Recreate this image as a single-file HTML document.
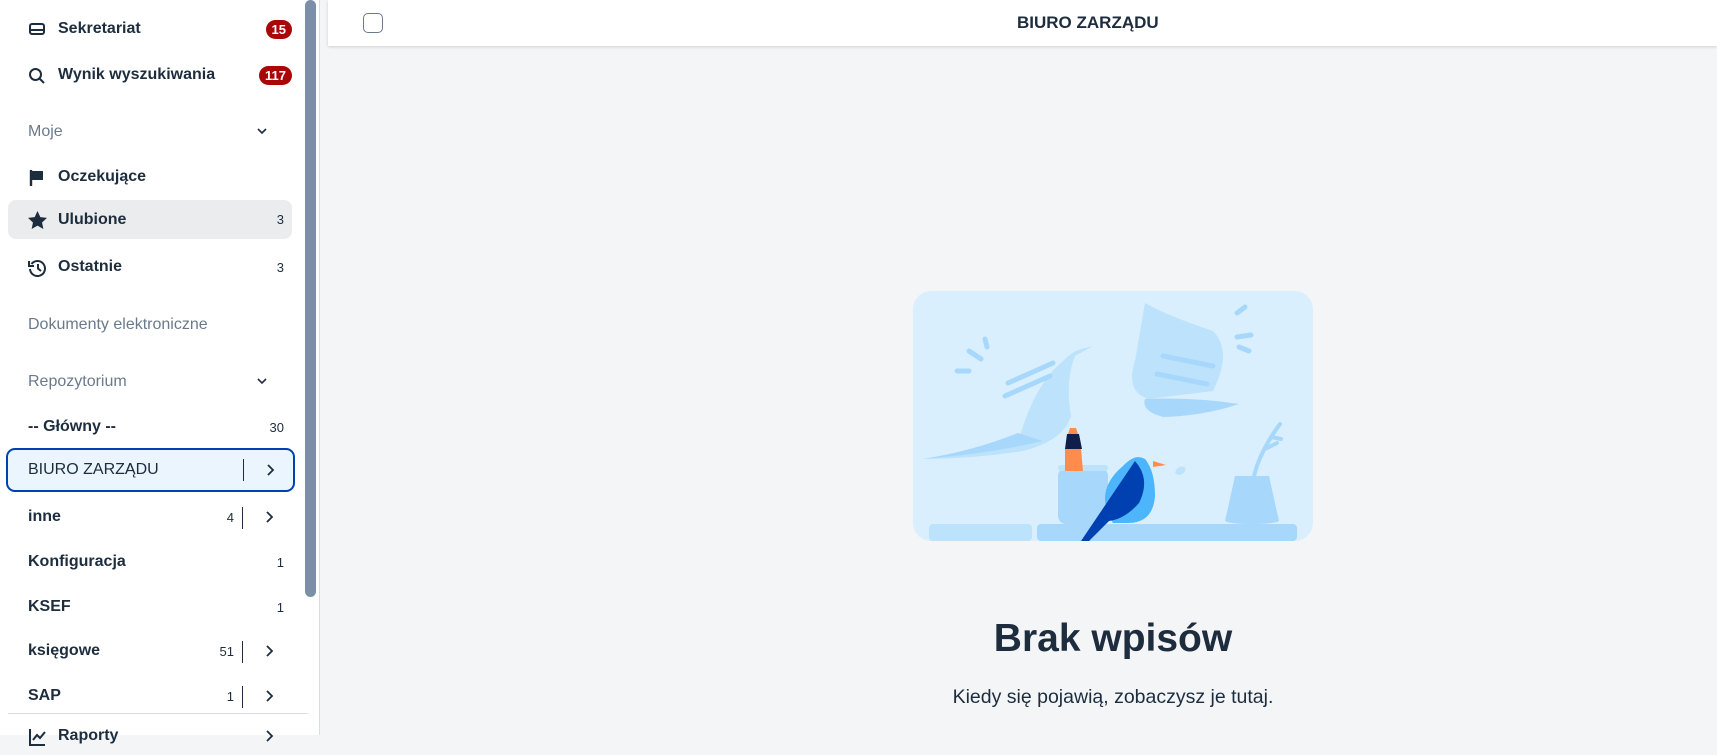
<!DOCTYPE html>
<html><head><meta charset="utf-8"><style>
*{box-sizing:border-box;margin:0;padding:0}
body{width:1717px;height:735px;overflow:hidden;background:#f4f5f7;font-family:"Liberation Sans",sans-serif;color:#1d2d3e;position:relative}
#side{position:absolute;left:0;top:0;width:320px;height:735px;background:#fff;border-right:1px solid #d9dde3}
.row{position:absolute;left:8px;width:284px;height:38px;display:flex;align-items:center;font-size:16px;font-weight:bold}
.row .ic{position:absolute;left:20px;top:11px}
.row .t{position:absolute;left:50px}
.row.s .t{left:20px}
.sec{color:#6a7a8c;font-weight:normal}
.cnt{position:absolute;right:8px;font-size:13px;font-weight:normal}
.badge{position:absolute;right:0;background:#aa0808;color:#fff;font-size:13px;font-weight:bold;border-radius:10px;padding:2px 6px}
.sep{position:absolute;left:234px;top:9px;width:1px;height:22px;background:#1d2d3e}
.chev{position:absolute;left:257px;top:11px}
#scroll{position:absolute;left:305px;top:0;width:11px;height:597px;background:#7b90a8;border-radius:6px}
#hdr{position:absolute;left:328px;top:0;right:0;height:46px;background:#fff;box-shadow:0 1px 3px rgba(0,0,0,.15)}
</style></head><body>
<div id="side">
<div class="row" style="top:10px"><svg class="ic" width="18" height="16" viewBox="0 0 18 16"><rect x="2" y="3" width="14" height="10" rx="2" fill="none" stroke="#1d2d3e" stroke-width="2"/><line x1="2" y1="9" x2="16" y2="9" stroke="#1d2d3e" stroke-width="2"/></svg><span class="t">Sekretariat</span><span class="badge">15</span></div>
<div class="row" style="top:56px"><svg class="ic" width="18" height="18" viewBox="0 0 18 18"><circle cx="7.5" cy="7.5" r="5.5" fill="none" stroke="#1d2d3e" stroke-width="2"/><line x1="11.5" y1="11.5" x2="16" y2="16" stroke="#1d2d3e" stroke-width="2"/></svg><span class="t">Wynik wyszukiwania</span><span class="badge">117</span></div>
<div class="row s" style="top:113px"><span class="t sec">Moje</span><svg class="chev" style="left:248px;top:14px" width="12" height="8" viewBox="0 0 12 8"><path d="M2 2l4 4 4-4" fill="none" stroke="#1d2d3e" stroke-width="1.6"/></svg></div>
<div class="row" style="top:158px"><svg class="ic" width="18" height="18" viewBox="0 0 18 18"><path d="M3 1v16" stroke="#1d2d3e" stroke-width="2.4"/><path d="M3 2h12v9H3z" fill="#1d2d3e"/></svg><span class="t">Oczekujące</span></div>
<div class="row" style="top:200px;background:#eaecee;border-radius:8px;height:39px"><svg class="ic" width="19" height="18" viewBox="0 0 20 19"><path d="M10 0l3 6.5 7 .8-5.2 4.8 1.4 6.9L10 15.5 3.8 19l1.4-6.9L0 7.3l7-.8z" fill="#1d2d3e"/></svg><span class="t">Ulubione</span><span class="cnt">3</span></div>
<div class="row" style="top:248px"><svg class="ic" width="19" height="18" viewBox="0 0 19 18"><path d="M3.5 5A7.5 7.5 0 1 1 2 10" fill="none" stroke="#1d2d3e" stroke-width="2"/><path d="M1 2v5h5" fill="none" stroke="#1d2d3e" stroke-width="2"/><path d="M10 5v4.5l3 2.5" fill="none" stroke="#1d2d3e" stroke-width="2"/></svg><span class="t">Ostatnie</span><span class="cnt">3</span></div>
<div class="row s" style="top:306px"><span class="t sec">Dokumenty elektroniczne</span></div>
<div class="row s" style="top:363px"><span class="t sec">Repozytorium</span><svg class="chev" style="left:248px;top:14px" width="12" height="8" viewBox="0 0 12 8"><path d="M2 2l4 4 4-4" fill="none" stroke="#1d2d3e" stroke-width="1.6"/></svg></div>
<div class="row s" style="top:408px"><span class="t">-- Główny --</span><span class="cnt">30</span></div>
<div class="row s" style="top:448px;left:6px;width:289px;height:44px;background:#ebf5fe;border:2px solid #0040b0;border-radius:9px"><span class="t" style="left:20px;font-weight:normal">BIURO ZARZĄDU</span><div class="sep" style="left:235px;top:9px"></div><svg class="chev" style="left:258px;top:14px" width="10" height="12" viewBox="0 0 10 12"><path d="M2 1l5 5-5 5" fill="none" stroke="#1d2d3e" stroke-width="1.8"/></svg></div>
<div class="row s" style="top:498px"><span class="t">inne</span><span class="cnt" style="right:58px">4</span><div class="sep"></div><svg class="chev" width="10" height="12" viewBox="0 0 10 12" style="top:13px"><path d="M2 1l5 5-5 5" fill="none" stroke="#1d2d3e" stroke-width="1.8"/></svg></div>
<div class="row s" style="top:543px"><span class="t">Konfiguracja</span><span class="cnt">1</span></div>
<div class="row s" style="top:588px"><span class="t">KSEF</span><span class="cnt">1</span></div>
<div class="row s" style="top:632px"><span class="t">księgowe</span><span class="cnt" style="right:58px">51</span><div class="sep"></div><svg class="chev" width="10" height="12" viewBox="0 0 10 12" style="top:13px"><path d="M2 1l5 5-5 5" fill="none" stroke="#1d2d3e" stroke-width="1.8"/></svg></div>
<div class="row s" style="top:677px"><span class="t">SAP</span><span class="cnt" style="right:58px">1</span><div class="sep"></div><svg class="chev" width="10" height="12" viewBox="0 0 10 12" style="top:13px"><path d="M2 1l5 5-5 5" fill="none" stroke="#1d2d3e" stroke-width="1.8"/></svg></div>
<div style="position:absolute;left:8px;top:713px;width:300px;height:1px;background:#d9dde3"></div>
<div class="row" style="top:717px"><svg class="ic" width="18" height="18" viewBox="0 0 18 18"><path d="M2 1v16h15" fill="none" stroke="#1d2d3e" stroke-width="2"/><path d="M5 12l4-5 3 3 5-6" fill="none" stroke="#1d2d3e" stroke-width="2"/></svg><span class="t">Raporty</span><svg class="chev" width="10" height="12" viewBox="0 0 10 12" style="top:13px"><path d="M2 1l5 5-5 5" fill="none" stroke="#1d2d3e" stroke-width="1.8"/></svg></div>
<div id="scroll"></div>
</div>
<div id="hdr">
<div style="position:absolute;left:35px;top:13px;width:20px;height:20px;border:1.5px solid #6a7a8c;border-radius:5px"></div>
<div style="position:absolute;left:689px;top:13px;font-size:17px;font-weight:bold">BIURO ZARZĄDU</div>
</div>
<svg style="position:absolute;left:913px;top:291px" width="400" height="250" viewBox="0 0 400 250">
<rect width="400" height="250" rx="18" fill="#d9effd"/>
<path d="M10 168 Q55 160 105 152 Q120 95 150 70 Q160 60 168 58 L180 55 L162 65 Q152 90 158 125 Q150 150 110 160 Q60 168 10 168z" fill="#bde2fc"/>
<path d="M10 168 Q80 162 130 150 L105 142 Q60 160 10 168z" fill="#a7d8fc"/>
<path d="M95 92l45-20M92 105l45-20" stroke="#a7d8fc" stroke-width="5" stroke-linecap="round"/>
<path d="M72 48l2 8M56 60l12 8M44 80h12" stroke="#a7d8fc" stroke-width="5" stroke-linecap="round"/>
<path d="M232 12 Q255 25 300 40 Q320 60 300 100 L235 108 Q212 100 222 70z" fill="#bde2fc"/>
<path d="M232 108 Q280 106 326 113 Q290 125 250 126 Q228 120 232 108z" fill="#a7d8fc"/>
<path d="M250 65l50 10M244 83l50 10" stroke="#a7d8fc" stroke-width="5" stroke-linecap="round"/>
<path d="M332 16l-8 6M338 44l-14 2M336 60l-10 -4" stroke="#a7d8fc" stroke-width="5" stroke-linecap="round"/>
<rect x="16" y="233" width="103" height="17" rx="4" fill="#bde2fc"/>
<rect x="124" y="233" width="260" height="17" rx="4" fill="#a7d8fc"/>
<rect x="145" y="177" width="50" height="56" rx="8" fill="#a7d8fc"/>
<rect x="145" y="174" width="50" height="6" rx="3" fill="#bde2fc"/>
<path d="M152 158h16l2 22h-18z" fill="#ff8c4a"/>
<path d="M154 143h12l3 15h-17z" fill="#0f1e4a"/>
<path d="M157 137h6l2 6h-10z" fill="#ff8c4a"/>
<path d="M200 232 Q180 200 210 175 Q222 162 232 168 Q242 180 242 205 Q240 232 215 232z" fill="#4cb5fb"/>
<path d="M168 250 L222 170 Q238 188 226 212 Q212 228 196 230 L174 252z" fill="#0040b0"/>
<path d="M240 170l13 4-13 2z" fill="#ff8c4a"/>
<path d="M262 182q2-8 10-6q2 6-6 8z" fill="#bde2fc"/>
<path d="M322 185h34l10 45q-5 3-27 3q-22 0-27-3z" fill="#a7d8fc"/>
<path d="M341 185q6-25 26-52M352 158l12-6M358 146l10 2" stroke="#a7d8fc" stroke-width="4" fill="none" stroke-linecap="round"/>
</svg>
<div style="position:absolute;left:813px;width:600px;top:617px;text-align:center;font-size:39px;font-weight:bold">Brak wpisów</div>
<div style="position:absolute;left:813px;width:600px;top:686px;text-align:center;font-size:19.5px">Kiedy się pojawią, zobaczysz je tutaj.</div>
</body></html>
